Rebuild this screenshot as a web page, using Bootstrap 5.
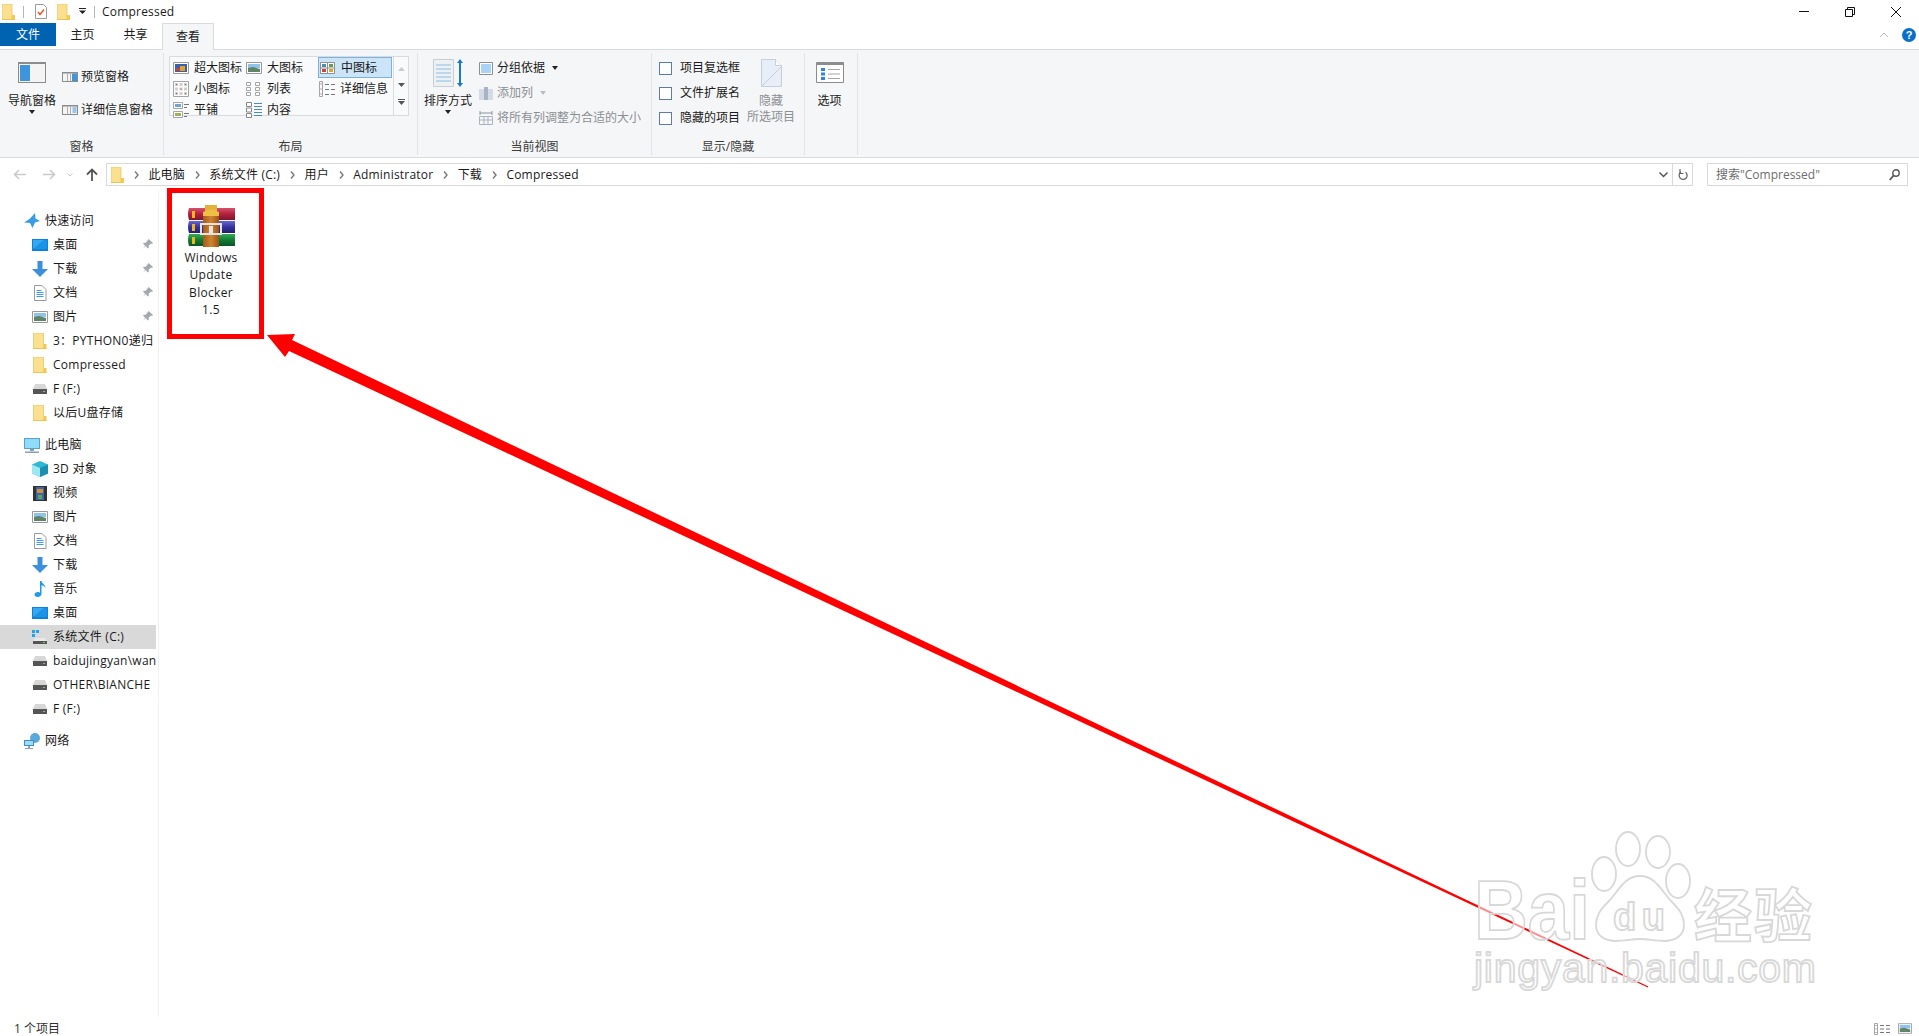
<!DOCTYPE html>
<html lang="zh-CN">
<head>
  <meta charset="UTF-8" />
  <meta name="viewport" content="width=device-width, initial-scale=1.0"/>
  <title>Compressed</title>
  <link href="https://cdn.jsdelivr.net/npm/bootstrap@5.3.3/dist/css/bootstrap.min.css" rel="stylesheet">
  <style>
    html, body { height: 100%; overflow: hidden; }
    body {
      background: #fff;
      color: #1a1a1a;
      font-family: "Open Sans", "Noto Sans CJK SC", sans-serif;
      font-size: 12px;
      line-height: 16px;
    }
    svg { display: block; flex: none; overflow: visible; }
    .win { position: relative; width: 1919px; height: 1036px; }

    .title-bar { height: 23px; padding-left: 2px; }
    .title-sep { width: 1px; height: 12px; background: #b5b5b5; }
    .tb-sep1 { margin-left: 8px; }
    .tb-doc { margin-left: 11px; }
    .tb-folder { margin-left: 10px; }
    .tb-caret { margin-left: 9px; }
    .tb-sep2 { margin: 0 7px 0 8px; }
    .app-title { letter-spacing: .2px; }
    .win-ctl { width: 46px; }

    .tab-row { height: 26px; position: relative; }
    .tab-file { width: 56px; height: 23px; background: #0063b1; color: #fff; }
    .tab-plain { width: 53px; height: 23px; }
    .tab-on {
      width: 52px; height: 27px; margin-bottom: -1px; position: relative; z-index: 1;
      background: #f5f6f7; border: 1px solid #dadbdc; border-bottom: 0;
    }
    .tab-help { margin-left: auto; padding-right: 3px; height: 23px; gap: 13px; }

    .ribbon {
      height: 109px;
      background: #f5f6f7;
      border-top: 1px solid #dadbdc;
      border-bottom: 1px solid #dadbdc;
    }
    .rb-group { border-right: 1px solid #e1e3e6; margin: 3px 0 2px; position: relative; }
    .rb-body { height: 84px; position: relative; }
    .rb-label { height: 18px; color: #3b3b3b; text-align: center; line-height: 19px; }
    .w-pane { width: 164px; }
    .w-layout { width: 254px; }
    .w-view { width: 234px; }
    .w-show { width: 153px; }
    .w-opt { width: 53px; }
    .big-btn { width: 58px; margin-left: 3px; padding-top: 9px; }
    .big-btn .big-ico { margin-bottom: 10px; }
    .sort-btn { margin-left: 1px; padding-top: 6px; }
    .sort-btn .big-ico { margin-bottom: 6px; }
    .caret-dn { width: 0; height: 0; margin-top: 1px; border: 3px solid transparent; border-top: 4px solid #222; border-bottom: 0; }
    .caret-inline { margin: 0 0 0 3px; }
    .caret-dim { border-top-color: #b9bcc2; }
    .pane-col { padding: 16px 0 0 1px; gap: 17px; }
    .pane-line { gap: 3px; }
    .side-col { gap: 9px; padding: 7px 0 0 2px; }
    .chk-col { gap: 9px; padding: 7px 0 0 7px; }
    .hide-btn { margin-left: 7px; padding-top: 6px; }
    .hide-btn .big-ico { margin-bottom: 6px; }
    .opt-btn { padding: 9px 3px 0 0; }
    .opt-btn .big-ico { margin-bottom: 10px; }
    .txt-dim { color: #8b8e93; }

    .gallery {
      width: 240px; height: 60px; margin: 3px 0 0 5px;
      background: #f9fafc; border: 1px solid #dadbdc;
    }
    .gal-grid { display: grid; grid-template-columns: 73px 73px 74px; grid-auto-rows: 21px; padding-left: 2px; width: 224px; }
    .gal-item { padding-left: 1px; gap: 5px; white-space: nowrap; height: 21px; }
    .gal-on { background: #cce4f7; border: 1px solid #7db1e0; padding-left: 1px; gap: 6px; }
    .gal-scroll { width: 15px; border-left: 1px solid #dadbdc; }

    .chk { width: 13px; height: 13px; background: #fff; border: 1px solid #5d7aa8; }

    .addr-row { height: 33px; }
    .nav-arrows { width: 97px; }
    .nav-a1 { margin-left: 13px; }
    .nav-a2 { margin-left: 17px; }
    .nav-a3 { margin-left: 11px; }
    .nav-a4 { margin-left: 13px; }
    .addr-box { width: 1587px; height: 23px; margin-left: 9px; border: 1px solid #d9d9d9; }
    .addr-path { gap: 9.7px; padding-left: 4px; flex: 1; white-space: nowrap; letter-spacing: .2px; }
    .addr-refresh { width: 20px; border-left: 1px solid #d9d9d9; height: 100%; }
    .search-box { width: 201px; height: 23px; margin-left: 14px; border: 1px solid #d9d9d9; color: #6d6d6d; padding: 0 7px 0 8px; }

    .main-area { height: 826px; }
    .side-nav { width: 159px; height: 826px; border-right: 1px solid #f0f0f0; padding-top: 18px; overflow: hidden; letter-spacing: .25px; }
    .nv-row { height: 24px; white-space: nowrap; overflow: hidden; width: 156px; position: relative; }
    .nv-top { padding-left: 24px; gap: 5px; }
    .nv-sub { padding-left: 32px; gap: 5px; }
    .nv-gap { margin-top: 8px; }
    .nv-sel { background: #d9d9d9; }
    .nv-pin { position: absolute; left: 143px; top: 6px; }
    .files { padding-top: 14px; }
    .file-tile { width: 104px; text-align: center; line-height: 17.3px; letter-spacing: .3px; }
    .file-tile svg { margin: 0 auto 2px; }

    .status-bar { height: 19px; padding: 4px 7px 0 14px; color: #2f2f2f; }

    .mark-box { position: absolute; left: 167px; top: 188px; width: 97px; height: 151px; border: 5px solid #ff0000; }
    .mark-arrow { position: absolute; left: 0; top: 0; pointer-events: none; }
    .wm-text { font-family: "Liberation Sans", "Noto Sans CJK SC", sans-serif; fill: #fff; fill-opacity: .55; stroke: #d8d8d8; stroke-width: 1.8px; }
    .wm-shape { fill: #fff; fill-opacity: .55; stroke: #d8d8d8; stroke-width: 1.8px; }
  </style>
</head>
<body>

<svg width="0" height="0" class="position-absolute">
  <defs>
    <linearGradient id="g-red" x1="0" y1="0" x2="0" y2="1"><stop offset="0" stop-color="#d8506c"/><stop offset=".5" stop-color="#b3203f"/><stop offset="1" stop-color="#7c1530"/></linearGradient>
    <linearGradient id="g-blue" x1="0" y1="0" x2="0" y2="1"><stop offset="0" stop-color="#6a66d6"/><stop offset=".5" stop-color="#36339c"/><stop offset="1" stop-color="#211f6e"/></linearGradient>
    <linearGradient id="g-green" x1="0" y1="0" x2="0" y2="1"><stop offset="0" stop-color="#32ad58"/><stop offset=".5" stop-color="#127a35"/><stop offset="1" stop-color="#0a5425"/></linearGradient>
    <linearGradient id="g-strap" x1="0" y1="0" x2="1" y2="0"><stop offset="0" stop-color="#a65a1a"/><stop offset=".5" stop-color="#cf8430"/><stop offset="1" stop-color="#9c5316"/></linearGradient>
    <symbol id="i-folder" viewBox="2 0 13 16">
      <path d="M2 0h9.500l.5.500V16H2z" fill="#fbe08f" stroke="#e8c564" stroke-width=".8"/>
      <path d="M12 11h3v5h-3z" fill="#f3c94f"/>
      <path d="M2 15h13v1H2z" fill="#eec34a"/>
    </symbol>
    <symbol id="i-desktop" viewBox="0 0 16 12">
      <path d="M0 0h16v12H0z" fill="#0a84d8"/>
      <path d="M1 1h14v9H1z" fill="#34a9f2"/>
      <path d="M1 10L12 1h3v9z" fill="#1c93e6"/>
    </symbol>
    <symbol id="i-down" viewBox="0 0 16 16">
      <path d="M5.500 0h5v8H16l-8 8-8-8h5.500z" fill="#3d8fdc"/>
    </symbol>
    <symbol id="i-doc" viewBox="0 0 13 16">
      <path d="M1 .5h7.500l4 4v11H1z" fill="#fff" stroke="#9a9a9a"/>
      <path d="M3 5h5v1H3zM3 7h7v1H3zM3 9h7v1H3zM3 11h7v1H3z" fill="#3d9be0"/>
    </symbol>
    <symbol id="i-pic" viewBox="0 0 16 12">
      <path d="M.5.5h15v11H.5z" fill="#fff" stroke="#999"/>
      <path d="M2 2h12v4H2z" fill="#8fc3ec"/>
      <path d="M2 6l5-1 7 2v3H2z" fill="#5f8468"/>
    </symbol>
    <symbol id="i-xl" viewBox="0 0 16 12">
      <path d="M.5.5h15v11H.5z" fill="#fff" stroke="#999"/>
      <path d="M2 2h12v8H2z" fill="#3c5fa8"/>
      <path d="M7 4h5v5H7z" fill="#d9a52e"/>
      <path d="M3 6h4v3H3z" fill="#b5493c"/>
    </symbol>
    <symbol id="i-drive" viewBox="0 0 14 10">
      <path d="M2 0h10l2 5H0z" fill="#d7d7d7"/>
      <path d="M0 5h14v5H0z" fill="#555"/>
      <path d="M10 7h2v1h-2z" fill="#5fd35f"/>
    </symbol>
    <symbol id="i-pin" viewBox="0 0 10 10">
      <path d="M5.500 0l4.500 4-1 1-1-.5L5.500 7l.5 1.500-1 1L2.500 7 0 10l2-3.500L0 4.500l1-1 1.500.500L4.500 1.500z" fill="#a4a9ae"/>
    </symbol>
    <symbol id="i-chev" viewBox="0 0 5 8">
      <path d="M1 .5L4 4 1 7.500" fill="none" stroke="#7a7a7a" stroke-width="1.400"/>
    </symbol>
    <symbol id="i-mid" viewBox="0 0 15 12">
      <path d="M.5.5h14v11H.5z" fill="#fff" stroke="#8f8f8f"/>
      <path d="M.5 6h14M7.500.5v11" stroke="#8f8f8f"/>
      <path d="M2 2h4v3H2z" fill="#4a89c8"/><path d="M9 2h4v3H9z" fill="#6e9a58"/>
      <path d="M2 7h4v3H2z" fill="#c5473a"/><path d="M9 7h4v3H9z" fill="#d9a52e"/>
    </symbol>
    <symbol id="i-small" viewBox="0 0 16 16">
      <path d="M.5.5h15v15H.5z" fill="#fff" stroke="#a5a5a5"/>
      <path d="M2 2h3v3H2zM6.500 2h3v3h-3zM11 2h3v3h-3zM2 6.500h3v3H2zM6.500 6.500h3v3h-3zM11 6.500h3v3h-3zM2 11h3v3H2zM6.500 11h3v3h-3zM11 11h3v3h-3z" fill="#cfcfcf"/>
      <path d="M3 3h1v1H3zM12 3h1v1h-1zM7.500 7.500h1v1h-1zM3 12h1v1H3zM12 12h1v1h-1z" fill="#b5493c"/>
    </symbol>
    <symbol id="i-list" viewBox="0 0 16 16">
      <path d="M.5 1.500h4v3h-4zM.5 6.500h4v3h-4zM.5 11.500h4v3h-4zM9.500 1.500h4v3h-4zM9.500 6.500h4v3h-4zM9.500 11.500h4v3h-4z" fill="#fff" stroke="#a5a5a5"/>
    </symbol>
    <symbol id="i-details" viewBox="0 0 16 16">
      <path d="M.5.5h3v15h-3z" fill="#fff" stroke="#a5a5a5"/>
      <path d="M1.500 2.500h1v1h-1zM1.500 7.500h1v1h-1zM1.500 12.500h1v1h-1z" fill="#8a4a3c"/>
      <path d="M6 3h4v1H6zM12 3h4v1h-4zM6 8h4v1H6zM12 8h4v1h-4zM6 13h4v1H6zM12 13h4v1h-4z" fill="#777"/>
    </symbol>
    <symbol id="i-tile" viewBox="0 0 16 16">
      <path d="M.5.5h9v6h-9zM.5 9.500h9v6h-9z" fill="#fff" stroke="#a5a5a5"/>
      <path d="M2 2h6v3H2z" fill="#6fa5d6"/><path d="M2 11h6v3H2z" fill="#9fb35a"/>
      <path d="M11 2h5v1h-5zM11 5h3v1h-3zM11 11h5v1h-5zM11 14h3v1h-3z" fill="#777"/>
    </symbol>
    <symbol id="i-content" viewBox="0 0 16 16">
      <path d="M.5.5h5v4h-5zM.5 6h5v4h-5zM.5 11.500h5v4h-5z" fill="#fff" stroke="#888"/>
      <path d="M8 1h8v1H8zM8 4h8v1H8zM8 7h8v1H8zM8 10h8v1H8zM8 13h8v1H8z" fill="#4a89c8"/>
    </symbol>
    <symbol id="i-pane" viewBox="0 0 16 10">
      <path d="M0 0h16v10H0z" fill="#8c8c8c"/>
      <path d="M1 1.500h14v7.500H1z" fill="#f4f4f4"/>
      <path d="M5 1.500h1v7.500H5zM8 1.500h1v7.500H8z" fill="#b0b0b0"/>
      <path d="M10 1.500h5v7.500h-5z" fill="#3f95dc"/>
    </symbol>
    <symbol id="i-pane2" viewBox="0 0 16 10">
      <path d="M0 0h16v10H0z" fill="#8c8c8c"/>
      <path d="M1 1.500h14v7.500H1z" fill="#f4f4f4"/>
      <path d="M5 1.500h1v7.500H5zM8 1.500h1v7.500H8z" fill="#b0b0b0"/>
      <path d="M10.500 2.500h4v1h-4zM10.500 4.500h4v1h-4zM10.500 6.500h4v1h-4z" fill="#3f95dc"/>
    </symbol>
  </defs>
</svg>

<div class="win">

  <div class="title-bar d-flex align-items-center">
    <svg width="13" height="16"><use href="#i-folder"/></svg>
    <span class="title-sep tb-sep1"></span>
    <svg width="12" height="15" class="tb-doc" viewBox="0 0 12 15"><path d="M.5.500h8l3 3v11H.5z" fill="#fff" stroke="#9a9a9a"/><path d="M3 8l2 2.500L9 5.500" fill="none" stroke="#e0552b" stroke-width="1.500"/></svg>
    <svg width="13" height="16" class="tb-folder"><use href="#i-folder"/></svg>
    <svg width="7" height="7" class="tb-caret" viewBox="0 0 7 7"><path d="M0 0h7v1H0zM0 2.500h7L3.500 6z" fill="#222"/></svg>
    <span class="title-sep tb-sep2"></span>
    <span class="app-title">Compressed</span>
    <div class="ms-auto d-flex align-items-center">
      <div class="win-ctl d-flex justify-content-center"><svg width="10" height="1"><path d="M0 0h10v1H0z" fill="#111"/></svg></div>
      <div class="win-ctl d-flex justify-content-center"><svg width="10" height="10" viewBox="0 0 10 10"><path d="M2.500 2.500V.5h7v7h-2M.5 2.500h7v7h-7z" fill="none" stroke="#111"/></svg></div>
      <div class="win-ctl d-flex justify-content-center"><svg width="10" height="10" viewBox="0 0 10 10"><path d="M0 0l10 10M10 0L0 10" stroke="#111"/></svg></div>
    </div>
  </div>

  <div class="tab-row d-flex align-items-start">
    <div class="tab-file d-flex align-items-center justify-content-center">文件</div>
    <div class="tab-plain d-flex align-items-center justify-content-center">主页</div>
    <div class="tab-plain d-flex align-items-center justify-content-center">共享</div>
    <div class="tab-on d-flex align-items-center justify-content-center">查看</div>
    <div class="tab-help d-flex align-items-center">
      <svg width="10" height="6" viewBox="0 0 10 6"><path d="M1 5l4-4 4 4" fill="none" stroke="#b5b5b5"/></svg>
      <svg width="14" height="14" viewBox="0 0 14 14"><circle cx="7" cy="7" r="7" fill="#0a6fc9"/><text x="7" y="11" text-anchor="middle" font-size="11" font-weight="700" fill="#fff" font-family="Liberation Sans">?</text></svg>
    </div>
  </div>

  <div class="ribbon d-flex">
    <div class="rb-group w-pane d-flex flex-column">
      <div class="rb-body d-flex">
        <div class="big-btn d-flex flex-column align-items-center">
          <svg width="28" height="21" viewBox="0 0 28 21" class="big-ico"><path d="M0 0h28v21H0z" fill="#8c8c8c"/><path d="M1 2h26v18H1z" fill="#f4f4f4"/><path d="M2 3h10v16H2z" fill="#3f95dc"/></svg>
          <span>导航窗格</span>
          <span class="caret-dn"></span>
        </div>
        <div class="pane-col d-flex flex-column">
          <div class="pane-line d-flex align-items-center"><svg width="16" height="10"><use href="#i-pane"/></svg><span>预览窗格</span></div>
          <div class="pane-line d-flex align-items-center"><svg width="16" height="10"><use href="#i-pane2"/></svg><span>详细信息窗格</span></div>
        </div>
      </div>
      <div class="rb-label">窗格</div>
    </div>

    <div class="rb-group w-layout d-flex flex-column">
      <div class="rb-body">
        <div class="gallery d-flex">
          <div class="gal-grid">
            <div class="gal-item d-flex align-items-center"><svg width="16" height="12"><use href="#i-xl"/></svg><span>超大图标</span></div>
            <div class="gal-item d-flex align-items-center"><svg width="16" height="12"><use href="#i-pic"/></svg><span>大图标</span></div>
            <div class="gal-item gal-on d-flex align-items-center"><svg width="15" height="12"><use href="#i-mid"/></svg><span>中图标</span></div>
            <div class="gal-item d-flex align-items-center"><svg width="16" height="16"><use href="#i-small"/></svg><span>小图标</span></div>
            <div class="gal-item d-flex align-items-center"><svg width="16" height="16"><use href="#i-list"/></svg><span>列表</span></div>
            <div class="gal-item d-flex align-items-center"><svg width="16" height="16"><use href="#i-details"/></svg><span>详细信息</span></div>
            <div class="gal-item d-flex align-items-center"><svg width="16" height="16"><use href="#i-tile"/></svg><span>平铺</span></div>
            <div class="gal-item d-flex align-items-center"><svg width="16" height="16"><use href="#i-content"/></svg><span>内容</span></div>
          </div>
          <div class="gal-scroll ms-auto d-flex flex-column align-items-center justify-content-around py-1">
            <svg width="7" height="4" viewBox="0 0 7 4"><path d="M3.500 0L7 4H0z" fill="#c8ccd1"/></svg>
            <svg width="7" height="4" viewBox="0 0 7 4"><path d="M0 0h7L3.500 4z" fill="#555"/></svg>
            <svg width="7" height="6" viewBox="0 0 7 6"><path d="M0 0h7v1H0zM0 2h7L3.500 6z" fill="#555"/></svg>
          </div>
        </div>
      </div>
      <div class="rb-label">布局</div>
    </div>

    <div class="rb-group w-view d-flex flex-column">
      <div class="rb-body d-flex">
        <div class="big-btn sort-btn d-flex flex-column align-items-center">
          <svg width="30" height="28" viewBox="0 0 30 28" class="big-ico"><path d="M.5.500h20v27H.5z" fill="#eef1f4" stroke="#c9ccd0"/><path d="M3 5h15v2H3zM3 9h15v2H3zM3 13h15v2H3zM3 17h15v2H3zM3 21h15v2H3z" fill="#bcd6ea"/><path d="M27 2v24" stroke="#1b78c8" stroke-width="2"/><path d="M24 4l3-4 3 4zM24 24l3 4 3-4z" fill="#1b78c8"/></svg>
          <span>排序方式</span>
          <span class="caret-dn"></span>
        </div>
        <div class="side-col d-flex flex-column">
          <div class="d-flex align-items-center gap-1"><svg width="14" height="13" viewBox="0 0 14 13"><path d="M.5.500h13v12H.5z" fill="#fff" stroke="#8b8e93"/><path d="M2 2h10v9H2z" fill="#a9d3f5"/></svg><span>分组依据</span><span class="caret-dn caret-inline"></span></div>
          <div class="d-flex align-items-center gap-1 txt-dim"><svg width="14" height="13" viewBox="0 0 14 13"><path d="M0 2h14v11H0z" fill="#d5dbe5"/><path d="M5 0h4v13H5z" fill="#aab3c4"/></svg><span>添加列</span><span class="caret-dn caret-dim caret-inline"></span></div>
          <div class="d-flex align-items-center gap-1 txt-dim"><svg width="14" height="14" viewBox="0 0 14 14"><path d="M.5 5.500h13v8H.5zM.5 9h13M5 5.500v8M9 5.500v8" fill="none" stroke="#aab3c4"/><path d="M1 2h12M1 0v4M13 0v4" stroke="#8a94a8"/></svg><span class="text-nowrap">将所有列调整为合适的大小</span></div>
        </div>
      </div>
      <div class="rb-label">当前视图</div>
    </div>

    <div class="rb-group w-show d-flex flex-column">
      <div class="rb-body d-flex">
        <div class="chk-col d-flex flex-column">
          <label class="d-flex align-items-center gap-2"><span class="chk"></span><span>项目复选框</span></label>
          <label class="d-flex align-items-center gap-2"><span class="chk"></span><span>文件扩展名</span></label>
          <label class="d-flex align-items-center gap-2"><span class="chk"></span><span>隐藏的项目</span></label>
        </div>
        <div class="hide-btn d-flex flex-column align-items-center txt-dim">
          <svg width="21" height="28" viewBox="0 0 21 28" class="big-ico"><path d="M.5.500h14l6 6v21H.500z" fill="#e8eef8" stroke="#c5cfe0"/><path d="M14.500.5v6h6" fill="#fff" stroke="#c5cfe0"/><path d="M1 27L20 8" stroke="#c5cfe0"/></svg>
          <span>隐藏</span>
          <span>所选项目</span>
        </div>
      </div>
      <div class="rb-label">显示/隐藏</div>
    </div>

    <div class="rb-group w-opt d-flex flex-column">
      <div class="rb-body opt-btn d-flex flex-column align-items-center">
        <svg width="28" height="21" viewBox="0 0 28 21" class="big-ico"><path d="M.5.500h27v20H.5z" fill="#fff" stroke="#8c8c8c"/><path d="M1 1h26v2H1z" fill="#8c8c8c"/><path d="M5 6h4v3H5zM5 10.500h4v3H5zM5 15h4v3H5z" fill="#2f86d6"/><path d="M12 7h12v1H12zM12 11.500h12v1H12zM12 16h12v1H12z" fill="#a5a5a5"/></svg>
        <span>选项</span>
      </div>
      <div class="rb-label">&nbsp;</div>
    </div>
  </div>

  <div class="addr-row d-flex align-items-center">
    <div class="nav-arrows d-flex align-items-center">
      <svg width="13" height="11" viewBox="0 0 13 11" class="nav-a1"><path d="M13 5.500H2M6 1L1.500 5.500 6 10" fill="none" stroke="#c9c9c9" stroke-width="1.500"/></svg>
      <svg width="13" height="11" viewBox="0 0 13 11" class="nav-a2"><path d="M0 5.500h11M7 1l4.500 4.500L7 10" fill="none" stroke="#c9c9c9" stroke-width="1.500"/></svg>
      <svg width="6" height="4" viewBox="0 0 6 4" class="nav-a3"><path d="M.5.500L3 3 5.500.5" fill="none" stroke="#c9c9c9"/></svg>
      <svg width="12" height="13" viewBox="0 0 12 13" class="nav-a4"><path d="M6 13V2M1 6.500L6 1.500l5 5" fill="none" stroke="#555" stroke-width="1.800"/></svg>
    </div>
    <div class="addr-box d-flex align-items-center">
      <div class="addr-path d-flex align-items-center">
        <svg width="13" height="16"><use href="#i-folder"/></svg>
        <svg width="5" height="8"><use href="#i-chev"/></svg><span>此电脑</span>
        <svg width="5" height="8"><use href="#i-chev"/></svg><span>系统文件 (C:)</span>
        <svg width="5" height="8"><use href="#i-chev"/></svg><span>用户</span>
        <svg width="5" height="8"><use href="#i-chev"/></svg><span>Administrator</span>
        <svg width="5" height="8"><use href="#i-chev"/></svg><span>下载</span>
        <svg width="5" height="8"><use href="#i-chev"/></svg><span>Compressed</span>
      </div>
      <svg width="9" height="6" viewBox="0 0 9 6" class="me-1"><path d="M.5.500l4 4 4-4" fill="none" stroke="#555" stroke-width="1.500"/></svg>
      <div class="addr-refresh d-flex align-items-center justify-content-center">
        <svg width="10" height="12" viewBox="0 0 10 12"><path d="M7.500 3.200A4 4 0 1 1 3 3" fill="none" stroke="#666" stroke-width="1.300"/><path d="M2 0v4.500h3.500" fill="none" stroke="#666" stroke-width="1.200"/></svg>
      </div>
    </div>
    <div class="search-box d-flex align-items-center justify-content-between">
      <span>搜索"Compressed"</span>
      <svg width="11" height="12" viewBox="0 0 11 12"><circle cx="7" cy="4" r="3.200" fill="none" stroke="#555" stroke-width="1.400"/><path d="M4.500 6.500L.8 11" stroke="#555" stroke-width="1.800"/></svg>
    </div>
  </div>

  <div class="main-area d-flex">
    <div class="side-nav">
      <div class="nv-row nv-top d-flex align-items-center"><svg width="16" height="16" viewBox="0 0 16 16"><path d="M11 0l.5 5.500L16 8l-5 1.500L8.500 15 6 10 0 9.500 5.500 6z" fill="#3a9be6"/></svg><span>快速访问</span></div>
      <div class="nv-row nv-sub d-flex align-items-center"><svg width="16" height="12"><use href="#i-desktop"/></svg><span>桌面</span><svg class="nv-pin" width="10" height="10"><use href="#i-pin"/></svg></div>
      <div class="nv-row nv-sub d-flex align-items-center"><svg width="16" height="16"><use href="#i-down"/></svg><span>下载</span><svg class="nv-pin" width="10" height="10"><use href="#i-pin"/></svg></div>
      <div class="nv-row nv-sub d-flex align-items-center"><svg width="16" height="16"><use href="#i-doc"/></svg><span>文档</span><svg class="nv-pin" width="10" height="10"><use href="#i-pin"/></svg></div>
      <div class="nv-row nv-sub d-flex align-items-center"><svg width="16" height="12"><use href="#i-pic"/></svg><span>图片</span><svg class="nv-pin" width="10" height="10"><use href="#i-pin"/></svg></div>
      <div class="nv-row nv-sub d-flex align-items-center"><svg width="16" height="16"><use href="#i-folder"/></svg><span>3：PYTHON0递归</span></div>
      <div class="nv-row nv-sub d-flex align-items-center"><svg width="16" height="16"><use href="#i-folder"/></svg><span>Compressed</span></div>
      <div class="nv-row nv-sub d-flex align-items-center"><svg width="16" height="10"><use href="#i-drive"/></svg><span>F (F:)</span></div>
      <div class="nv-row nv-sub d-flex align-items-center"><svg width="16" height="16"><use href="#i-folder"/></svg><span>以后U盘存储</span></div>

      <div class="nv-row nv-top nv-gap d-flex align-items-center"><svg width="16" height="15" viewBox="0 0 16 15"><path d="M0 0h16v11H0z" fill="#5a9fd8"/><path d="M1 1h14v9H1z" fill="#8fdcfb"/><path d="M6 11h4v2H6zM1 13.500h14v1.500H1z" fill="#8aa0b5"/></svg><span>此电脑</span></div>
      <div class="nv-row nv-sub d-flex align-items-center"><svg width="16" height="16" viewBox="0 0 16 16"><path d="M8 0l8 3.500v9L8 16 0 12.500v-9z" fill="#2fb8d4"/><path d="M8 7l8-3.500v9L8 16z" fill="#1b8fb0"/><path d="M0 3.500L8 7v9l-8-3.500z" fill="#9fe8f2"/></svg><span>3D 对象</span></div>
      <div class="nv-row nv-sub d-flex align-items-center"><svg width="16" height="15" viewBox="0 0 14 15"><path d="M0 0h14v15H0z" fill="#333"/><path d="M3 1h8v13H3z" fill="#3b66b8"/><path d="M4 3h6v4H4z" fill="#d9902e"/><path d="M5 9h4v4H5z" fill="#5da845"/></svg><span>视频</span></div>
      <div class="nv-row nv-sub d-flex align-items-center"><svg width="16" height="12"><use href="#i-pic"/></svg><span>图片</span></div>
      <div class="nv-row nv-sub d-flex align-items-center"><svg width="16" height="16"><use href="#i-doc"/></svg><span>文档</span></div>
      <div class="nv-row nv-sub d-flex align-items-center"><svg width="16" height="16"><use href="#i-down"/></svg><span>下载</span></div>
      <div class="nv-row nv-sub d-flex align-items-center"><svg width="16" height="16" viewBox="0 0 16 16"><path d="M8 0h1.500c.5 3 4 3.500 4 7-1-2-2.500-2.500-4-2.500V13c0 2-2 3-4 3s-3-1-3-2.500S4 11 6 11c1 0 1.500.2 2 .5z" fill="#1f9be8"/></svg><span>音乐</span></div>
      <div class="nv-row nv-sub d-flex align-items-center"><svg width="16" height="12"><use href="#i-desktop"/></svg><span>桌面</span></div>
      <div class="nv-row nv-sub nv-sel d-flex align-items-center"><svg width="16" height="14" viewBox="0 0 16 14"><path d="M0 0h3v3H0zM4 0h3v3H4zM0 4h3v3H0z" fill="#1fa3ea"/><path d="M3 8h10l2 3H1z" fill="#e8e8e8"/><path d="M1 11h14v3H1z" fill="#555"/><path d="M11 12h2v1h-2z" fill="#5fd35f"/></svg><span>系统文件 (C:)</span></div>
      <div class="nv-row nv-sub d-flex align-items-center"><svg width="16" height="10"><use href="#i-drive"/></svg><span>baidujingyan\wan</span></div>
      <div class="nv-row nv-sub d-flex align-items-center"><svg width="16" height="10"><use href="#i-drive"/></svg><span>OTHER\BIANCHE</span></div>
      <div class="nv-row nv-sub d-flex align-items-center"><svg width="16" height="10"><use href="#i-drive"/></svg><span>F (F:)</span></div>

      <div class="nv-row nv-top nv-gap d-flex align-items-center"><svg width="16" height="16" viewBox="0 0 16 16"><circle cx="11" cy="5" r="5" fill="#5aa9dd"/><path d="M0 7h10v6H0z" fill="#3d8fcf"/><path d="M1 8h8v4H1z" fill="#9fdcf5"/><path d="M4 13h2v2H4zM1 15h8v1H1z" fill="#8aa0b5"/></svg><span>网络</span></div>
    </div>

    <div class="files flex-grow-1">
      <div class="file-tile">
        <svg width="48" height="42" viewBox="0 0 48 42">
          <path d="M2 3h46v12H2q-2-6 0-12z" fill="url(#g-red)"/>
          <path d="M2 16h46v12H2q-2-6 0-12z" fill="url(#g-blue)"/>
          <path d="M2 29h46v12H2q-2-6 0-12z" fill="url(#g-green)"/>
          <path d="M5 6h3v7H5zM5 19h3v7H5zM5 32h3v7H5z" fill="#f2b51f"/>
          <path d="M16 8q8-5 16 0v34H16z" fill="url(#g-strap)"/>
          <path d="M18 0h12v8H18z" fill="#e4b23a"/>
          <path d="M16 7q8-5 16 0v4H16z" fill="#eebe45"/>
          <path d="M14 19h20v10H14z" fill="none" stroke="#e4e4e4" stroke-width="2"/>
          <path d="M22 21h4v7h-4z" fill="#e4e4e4"/>
        </svg>
        <div>Windows<br>Update<br>Blocker<br>1.5</div>
      </div>
    </div>
  </div>

  <div class="status-bar d-flex align-items-center justify-content-between">
    <span>1 个项目</span>
    <div class="d-flex align-items-center gap-2">
      <svg width="16" height="12" viewBox="0 0 16 12"><path d="M.5.500h3v11h-3z" fill="#fff" stroke="#a5a5a5"/><path d="M1.500 2h1v1h-1zM1.500 5.500h1v1h-1zM1.500 9h1v1h-1z" fill="#777"/><path d="M6 2h4v1H6zM12 2h4v1h-4zM6 5.500h4v1H6zM12 5.500h4v1h-4zM6 9h4v1H6zM12 9h4v1h-4z" fill="#777"/></svg>
      <svg width="14" height="11"><use href="#i-pic"/></svg>
    </div>
  </div>

  <div class="mark-box"></div>
  <svg class="mark-arrow" width="1919" height="1036" viewBox="0 0 1919 1036">
    <polygon points="267,335 295,334 292,340 1648.400,986.600 1647.800,987.400 289,351 285,357" fill="#ff0000"/>
    <g class="watermark">
      <text class="wm-text" x="1474" y="939" font-size="84" font-weight="700" textLength="116" lengthAdjust="spacingAndGlyphs">Bai</text>
      <ellipse class="wm-shape" cx="1628" cy="849" rx="12" ry="17"/>
      <ellipse class="wm-shape" cx="1658" cy="852" rx="12" ry="16"/>
      <ellipse class="wm-shape" cx="1604" cy="874" rx="12" ry="17"/>
      <ellipse class="wm-shape" cx="1678" cy="881" rx="12" ry="17"/>
      <path class="wm-shape" d="M1640 876c-16 0-22 16-32 26-8 8-12 14-12 23 0 10 8 16 20 16 10 0 16-2 24-2s14 2 24 2c12 0 20-6 20-16 0-9-4-15-12-23-10-10-16-26-32-26z"/>
      <text class="wm-text" x="1613" y="930" font-size="38" font-weight="700" textLength="52">du</text>
      <text class="wm-text" x="1694" y="937" font-size="58" font-weight="700" textLength="118">经验</text>
      <text class="wm-text" x="1474" y="982" font-size="41" textLength="342">jingyan.baidu.com</text>
    </g>
  </svg>

</div>

</body>
</html>
